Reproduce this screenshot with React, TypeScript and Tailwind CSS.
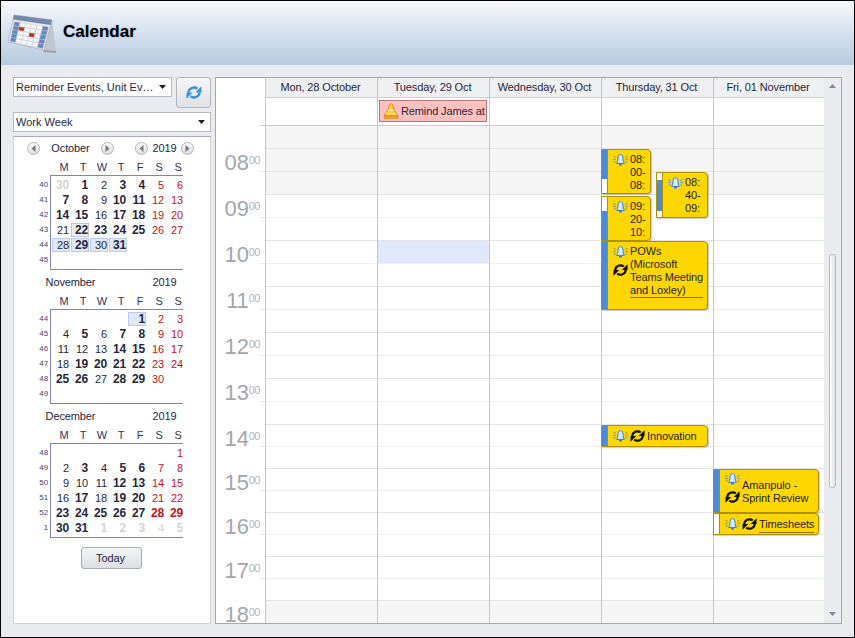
const FONT = "font-['Liberation_Sans',Arial,sans-serif]";

const WEEKDAYS = ['M', 'T', 'W', 'T', 'F', 'S', 'S'];

const MONTHS = [
    {
        name: 'October',
        nav: true,
        weeks: ['40', '41', '42', '43', '44', '45'],
        days: [
            '30bg 1b 2 3b 4b 5r 6r',
            '7b 8b 9 10b 11b 12r 13r',
            '14b 15b 16 17b 18b 19r 20r',
            '21 22bt 23b 24b 25b 26r 27r',
            '28s 29bs 30s 31bs - - -',
            '- - - - - - -',
        ],
    },
    {
        name: 'November',
        nav: false,
        weeks: ['44', '45', '46', '47', '48', '49'],
        days: [
            '- - - - 1bs 2r 3r',
            '4 5b 6 7b 8b 9r 10r',
            '11 12 13 14b 15b 16r 17r',
            '18 19b 20b 21b 22b 23r 24r',
            '25b 26b 27 28b 29b 30r -',
            '- - - - - - -',
        ],
    },
    {
        name: 'December',
        nav: false,
        weeks: ['48', '49', '50', '51', '52', '1'],
        days: [
            '- - - - - - 1r',
            '2 3b 4 5b 6b 7r 8r',
            '9 10 11 12b 13b 14r 15r',
            '16 17b 18 19b 20b 21r 22r',
            '23b 24b 25b 26b 27b 28br 29br',
            '30b 31b 1bg 2bg 3bg 4g 5bg',
        ],
    },
];

const DAYS = ['Mon, 28 October', 'Tuesday, 29 Oct', 'Wednesday, 30 Oct', 'Thursday, 31 Oct', 'Fri, 01 November'];

// half hour rows from 07:30 down, the grid is a few px tighter after 14:00
const ROWS = [
    { h: 'h-[23px]', label: '' },
    { h: 'h-[23px]', label: '08' },
    { h: 'h-[23px]', label: '' },
    { h: 'h-[23px]', label: '09' },
    { h: 'h-[23px]', label: '' },
    { h: 'h-[23px]', label: '10' },
    { h: 'h-[23px]', label: '' },
    { h: 'h-[23px]', label: '11' },
    { h: 'h-[23px]', label: '' },
    { h: 'h-[23px]', label: '12' },
    { h: 'h-[23px]', label: '' },
    { h: 'h-[23px]', label: '13' },
    { h: 'h-[23px]', label: '' },
    { h: 'h-[22px]', label: '14' },
    { h: 'h-[22px]', label: '' },
    { h: 'h-[22px]', label: '15' },
    { h: 'h-[22px]', label: '' },
    { h: 'h-[22px]', label: '16' },
    { h: 'h-[22px]', label: '' },
    { h: 'h-[22px]', label: '17' },
    { h: 'h-[22px]', label: '' },
    { h: 'h-[23px]', label: '18' },
];

function SyncIcon({ color = '#111', className = 'w-[15px] h-[14px]' }: { color?: string; className?: string }) {
    return (
        <svg viewBox="0 0 16 14" className={className}>
            <path d="M2.5 7 A5.5 5 0 0 1 11.5 3.2" fill="none" stroke={color} strokeWidth="2.4" />
            <path d="M15.5 .8 V7 H9.3 Z" fill={color} />
            <path d="M13.5 7 A5.5 5 0 0 1 4.5 10.8" fill="none" stroke={color} strokeWidth="2.4" />
            <path d="M.5 13.2 V7 H6.7 Z" fill={color} />
        </svg>
    );
}

function AlarmBell() {
    return (
        <svg viewBox="0 0 15 12" className="w-[15px] h-[12px] shrink-0">
            <path d="M7.5 .6 C5.6 .6 5 2.4 5 4.4 C5 6.6 4.4 8.2 3.6 9.4 H11.4 C10.6 8.2 10 6.6 10 4.4 C10 2.4 9.4 .6 7.5 .6 Z" fill="#d5ecff" stroke="#1f6ff0" strokeWidth=".9" />
            <path d="M6.2 10 H8.8 V11.5 H6.2 Z" fill="#1f6ff0" />
            <path d="M.4 2.4 L2.8 3.6 M0 5.6 H2.8 M.6 8.6 L2.8 7.6 M14.6 2.4 L12.2 3.6 M15 5.6 H12.2 M14.4 8.6 L12.2 7.6" stroke="#3d8df0" strokeWidth=".9" fill="none" />
        </svg>
    );
}

function ReminderBell() {
    return (
        <svg viewBox="0 0 16 16" className="w-[16px] h-[16px] shrink-0">
            <path d="M8 .8 C6.6 .8 6.2 2 5.8 3.6 C5.2 6.6 3.8 9 1.6 11.4 V13 H14.4 V11.4 C12.2 9 10.8 6.6 10.2 3.6 C9.8 2 9.4 .8 8 .8 Z" fill="#fdc83c" stroke="#d8820e" strokeWidth=".9" />
            <path d="M4.8 7.4 H11.2 M3 10.6 H13" stroke="#fff2b0" strokeWidth="1" />
            <path d="M1 13.2 H15 V15.4 H1 Z" fill="#f7a823" stroke="#d8820e" strokeWidth=".7" />
        </svg>
    );
}

function NavButton({ dir, hidden }: { dir: 'l' | 'r'; hidden?: boolean }) {
    return (
        <div className={`w-[13px] h-[13px] rounded-full border border-[#b4b5bc] bg-gradient-to-b from-[#fbfbfc] to-[#dcdde2] flex items-center justify-center ${hidden ? 'invisible' : ''}`}>
            <svg viewBox="0 0 5 7" className="w-[5px] h-[7px]">
                <path d={dir === 'l' ? 'M4.5 0 V7 L.5 3.5 Z' : 'M.5 0 V7 L4.5 3.5 Z'} fill="#77787f" />
            </svg>
        </div>
    );
}

function Combo({ text, className }: { text: string; className: string }) {
    return (
        <div className={`${className} h-[20px] bg-white border border-[#b7b9c2] flex items-center justify-between pl-[2px] pr-[5px] text-[11px] tracking-[0.02px] text-[#26263a]`}>
            <span>{text}</span>
            <svg viewBox="0 0 7 4" className="w-[7px] h-[4px]"><path d="M0 0 H7 L3.5 4 Z" fill="#222" /></svg>
        </div>
    );
}

function dayClass(flags: string) {
    let color = 'text-[#26263a]';
    if (flags.includes('r')) color = 'text-[#c8101c]';
    if (flags.includes('g')) color = 'text-[#d2d2d2]';
    const weight = flags.includes('b') ? 'font-bold text-[12px]' : 'text-[11px]';
    let box = 'border-transparent';
    if (flags.includes('s')) box = 'border-[#bccbec] bg-[#dfe7f9]';
    if (flags.includes('t')) box = 'border-[#c6c7cc] bg-[#eeeeee]';
    return `${color} ${weight} ${box}`;
}

function Month({ month, first }: { month: typeof MONTHS[number]; first: boolean }) {
    return (
        <div>
            <div className={`flex items-center pl-[13px] ${first ? 'h-[22px]' : 'h-[23px] pt-[2px]'} text-[11px] text-[#26263a]`}>
                <NavButton dir="l" hidden={!month.nav} />
                <div className="w-[61px] text-center">{month.name}</div>
                <NavButton dir="r" hidden={!month.nav} />
                <div className="w-[21px]" />
                <NavButton dir="l" hidden={!month.nav} />
                <div className="w-[33px] text-center">2019</div>
                <NavButton dir="r" hidden={!month.nav} />
            </div>
            <div className="h-[16px] pl-[38px] grid grid-cols-[repeat(7,19px)] items-center text-[11px] leading-none text-[#33335a]">
                {WEEKDAYS.map((d, i) => <div key={i} className="text-center pl-[5px]">{d}</div>)}
            </div>
            <div className="flex">
                <div className="w-[36px] pt-[2px] pr-[2px] text-right text-[8px] text-[#44446a]">
                    {month.weeks.map((w, i) => <div key={i} className="h-[15px] leading-[15px]">{w}</div>)}
                </div>
                <div className="w-[133px] h-[95px] overflow-hidden border border-r-0 border-[#8583b5] pt-[2px] pl-px">
                    {month.days.map((row, r) => (
                        <div key={r} className="grid grid-cols-[repeat(7,19px)] w-[133px] h-[15px]">
                            {row.split(' ').map((cell, c) => {
                                if (cell === '-') return <div key={c} />;
                                const num = cell.replace(/[a-z]/g, '');
                                const flags = cell.replace(/[0-9]/g, '');
                                return (
                                    <div key={c} className={`w-[18px] h-[14px] border text-right leading-[13px] ${dayClass(flags)}`}>{num}</div>
                                );
                            })}
                        </div>
                    ))}
                </div>
            </div>
        </div>
    );
}

function Bar({ parts }: { parts: string[] }) {
    return (
        <div className="w-[6px] shrink-0 flex flex-col border-r border-[#b09000] bg-white">
            {parts.map((p, i) => <div key={i} className={p} />)}
        </div>
    );
}

const BLUE = 'bg-[#4a8bdc]';

function Event({ pos, bar, children }: { pos: string; bar: string[]; children: React.ReactNode }) {
    return (
        <div className={`absolute ${pos} flex overflow-hidden bg-[#ffd700] border border-[#b09000] rounded-r-[4px] shadow-[1px_1px_1px_rgba(0,0,0,0.2)] text-[11px] leading-[13px] text-[#26262a]`}>
            <Bar parts={bar} />
            {children}
        </div>
    );
}

function ThursdayEvents() {
    return (
        <>
            <Event pos="left-[-1px] top-[71px] w-[50px] h-[45px]" bar={[`h-[29px] ${BLUE}`]}>
                <div className="flex pl-[5px] pt-[3px] gap-[2px]">
                    <div className="pt-px"><AlarmBell /></div>
                    <div>08:<br />00-<br />08:</div>
                </div>
            </Event>
            <Event pos="left-[-1px] top-[118px] w-[50px] h-[45px]" bar={['h-[14px]', `h-[30px] ${BLUE}`]}>
                <div className="flex pl-[5px] pt-[3px] gap-[2px]">
                    <div className="pt-px"><AlarmBell /></div>
                    <div>09:<br />20-<br />10:</div>
                </div>
            </Event>
            <Event pos="left-[54px] top-[94px] w-[52px] h-[46px]" bar={['h-[7px]', `h-[31px] ${BLUE}`]}>
                <div className="flex pl-[5px] pt-[3px] gap-[2px]">
                    <div className="pt-px"><AlarmBell /></div>
                    <div>08:<br />40-<br />09:</div>
                </div>
            </Event>
            <Event pos="left-[-1px] top-[163px] w-[107px] h-[69px]" bar={[`h-[69px] ${BLUE}`]}>
                <div className="flex pl-[5px] pt-[3px] gap-[2px]">
                    <div className="flex flex-col items-center pt-px gap-[5px]">
                        <AlarmBell />
                        <SyncIcon />
                    </div>
                    <div className="w-[73px] h-[53px] border-b border-[#8a7400] whitespace-nowrap">POWs<br />(Microsoft<br />Teams Meeting<br />and Loxley)</div>
                </div>
            </Event>
            <Event pos="left-[-1px] top-[347px] w-[107px] h-[22px]" bar={[`h-[22px] ${BLUE}`]}>
                <div className="flex items-center pl-[5px] gap-[2px]">
                    <AlarmBell />
                    <SyncIcon />
                    <div>Innovation</div>
                </div>
            </Event>
        </>
    );
}

function FridayEvents() {
    return (
        <>
            <Event pos="left-[-1px] top-[391px] w-[106px] h-[44px]" bar={[`h-[44px] ${BLUE}`]}>
                <div className="flex pl-[5px] pt-[3px] gap-[2px]">
                    <div className="flex flex-col items-center gap-[5px]">
                        <AlarmBell />
                        <SyncIcon />
                    </div>
                    <div className="pt-[6px] whitespace-nowrap">Amanpulo -<br />Sprint Review</div>
                </div>
            </Event>
            <Event pos="left-[-1px] top-[435px] w-[106px] h-[22px]" bar={[]}>
                <div className="flex items-center pl-[5px] gap-[2px]">
                    <AlarmBell />
                    <SyncIcon />
                    <div className="border-b border-[#8a7400] mt-[2px] w-[55px] h-[15px] whitespace-nowrap">Timesheets</div>
                </div>
            </Event>
        </>
    );
}

function DayColumn({ name, index }: { name: string; index: number }) {
    const width = index === 4 ? 'w-[111px]' : 'w-[112px]';
    return (
        <div className={`${width} relative border-l border-[#c5c5d0] flex flex-col`}>
            <div className="h-[20px] bg-[#eff0f2] border-b border-[#cfcfd6] pr-[2px] text-center text-[11px] leading-[19px] text-[#26263a]">{name}</div>
            <div className="h-[27px] bg-white pl-px pt-[2px]">
                {index === 1 && (
                    <div className="w-[108px] h-[22px] bg-[#ffc0c0] border border-[#b07878] flex items-center gap-[2px] pl-[3px] text-[11px] text-[#26263a] whitespace-nowrap">
                        <ReminderBell />
                        <span>Remind James at</span>
                    </div>
                )}
            </div>
            {ROWS.map((row, i) => {
                const gray = i < 3 || i === 21;
                let line = row.label ? 'border-[#e4e4e8]' : 'border-[#f0f0f3]';
                if (gray) line = 'border-[#e2e2e4]';
                if (i === 0) line = 'border-[#c9c9d2]';
                const bg = i === 5 && index === 1 ? 'bg-[#e0e8fa]' : gray ? 'bg-[#f5f5f6]' : 'bg-white';
                return <div key={i} className={`${row.h} border-t ${line} ${bg}`} />;
            })}
            {index === 3 && <ThursdayEvents />}
            {index === 4 && <FridayEvents />}
        </div>
    );
}

function TimeColumn() {
    return (
        <div className="w-[49px] bg-white flex flex-col">
            <div className="h-[47px] shrink-0" />
            {ROWS.map((row, i) => (
                <div key={i} className={`${row.h} shrink-0 flex flex-col items-end`}>
                    <div className={`h-px ${row.label ? 'w-[16px] bg-[#e0e0e4]' : i === 0 ? 'w-[5px] bg-[#c9c9d2]' : 'w-[5px] bg-[#e6e6ea]'}`} />
                    {row.label && (
                        <div className="flex items-start pr-[5px] pt-[3px]">
                            <span className="text-[22px] leading-[24px] text-[#a6a6aa]">{row.label}</span>
                            <span className="text-[11px] leading-[14px] mt-[2px] tracking-[-0.5px] text-[#b4b2c0]">00</span>
                        </div>
                    )}
                </div>
            ))}
        </div>
    );
}

function CalendarLogo() {
    // bilinear position on the tilted page
    const pt = (u: number, v: number) => {
        const top = [7 + 38 * u, 2 + 5 * u];
        const bot = [1 + 36 * u, 29 + 8 * u];
        return [top[0] + (bot[0] - top[0]) * v, top[1] + (bot[1] - top[1]) * v];
    };
    const quad = (u0: number, v0: number, u1: number, v1: number) =>
        [pt(u0, v0), pt(u1, v0), pt(u1, v1), pt(u0, v1)].map(p => p.join(',')).join(' ');
    const cells: { u: number; v: number; fill: string }[] = [];
    for (let r = 0; r < 5; r++) {
        for (let c = 0; c < 6; c++) {
            let fill = '#f6f7f9';
            if (c === 0 || c === 5) fill = '#6488bd';
            if ((r === 1 && c === 1) || (r === 2 && c === 3)) fill = '#c0351a';
            cells.push({ u: 0.05 + c * 0.152, v: 0.24 + r * 0.145, fill });
        }
    }
    return (
        <svg viewBox="0 0 50 44" className="w-[50px] h-[44px] ml-[6px] mt-[12px] shrink-0">
            <path d="M45 7 L49 38 L37 37 Z" fill="#c3c6cc" />
            <path d="M37 37 L49 38 L48.6 40 L36 39 Z" fill="#9ea2aa" />
            <polygon points={quad(0, 0, 1, 1)} fill="#e8eaee" stroke="#9aa0ac" strokeWidth=".6" />
            <polygon points={quad(0, 0, 1, 0.17)} fill="#7488ad" />
            {cells.map((cell, i) => (
                <polygon key={i} points={quad(cell.u, cell.v, cell.u + 0.148, cell.v + 0.14)} fill={cell.fill} stroke="#b9bec9" strokeWidth=".4" />
            ))}
        </svg>
    );
}

export default function App() {
    return (
        <div className={`${FONT} tracking-[-0.12px] w-[855px] h-[638px] border border-black bg-[#e9ebef] flex flex-col overflow-hidden`}>
            <div className="h-[64px] shrink-0 flex bg-gradient-to-b from-[#f7f9fc] to-[#b6cae0]">
                <CalendarLogo />
                <div className="ml-[6px] mt-[20px] text-[17px] tracking-normal leading-[22px] font-bold text-black [text-shadow:0_0_2px_rgba(60,90,150,0.45)]">Calendar</div>
            </div>
            <div className="flex-1 flex pl-[12px] pt-[12px] pb-[13px] gap-[4px] min-h-0">
                <div className="w-[198px] flex flex-col">
                    <div className="flex gap-[4px] h-[31px]">
                        <Combo text="Reminder Events, Unit Ev…" className="w-[159px]" />
                        <div className="w-[35px] h-[31px] rounded-[3px] border border-[#b2b4ba] bg-gradient-to-b from-[#f5f6f8] to-[#dfe1e6] flex items-center justify-center">
                            <SyncIcon color="#3d8fe0" className="w-[16px] h-[15px]" />
                        </div>
                    </div>
                    <Combo text="Work Week" className="w-[198px] mt-[4px]" />
                    <div className="flex-1 mt-[4px] bg-white border border-[#d2d3d8] border-t-[#a8a8c2]">
                        {MONTHS.map((m, i) => <Month key={m.name} month={m} first={i === 0} />)}
                        <div className="flex justify-center pr-[1px] pt-[9px]">
                            <div className="w-[61px] h-[22px] rounded-[3px] border border-[#a9aab2] bg-gradient-to-b from-[#f4f5f7] to-[#dcdee4] pr-[2px] text-center text-[11px] leading-[20px] text-[#26263a]">Today</div>
                        </div>
                    </div>
                </div>
                <div className="w-[627px] h-[547px] border border-[#a4a5b5] flex overflow-hidden">
                    <div className="w-[608px] flex bg-white overflow-hidden">
                        <TimeColumn />
                        {DAYS.map((d, i) => <DayColumn key={d} name={d} index={i} />)}
                    </div>
                    <div className="w-[17px] flex flex-col items-center">
                        <svg viewBox="0 0 7 4" className="w-[7px] h-[4px] mt-[6px]"><path d="M3.5 0 L7 4 H0 Z" fill="#85869a" /></svg>
                        <div className="w-[7px] h-[234px] mt-[166px] rounded-[3px] border border-[#b8b9c2] bg-gradient-to-r from-white to-[#dcdde0]" />
                        <svg viewBox="0 0 7 4" className="w-[7px] h-[4px] mt-[124px]"><path d="M0 0 H7 L3.5 4 Z" fill="#85869a" /></svg>
                    </div>
                </div>
            </div>
        </div>
    );
}
